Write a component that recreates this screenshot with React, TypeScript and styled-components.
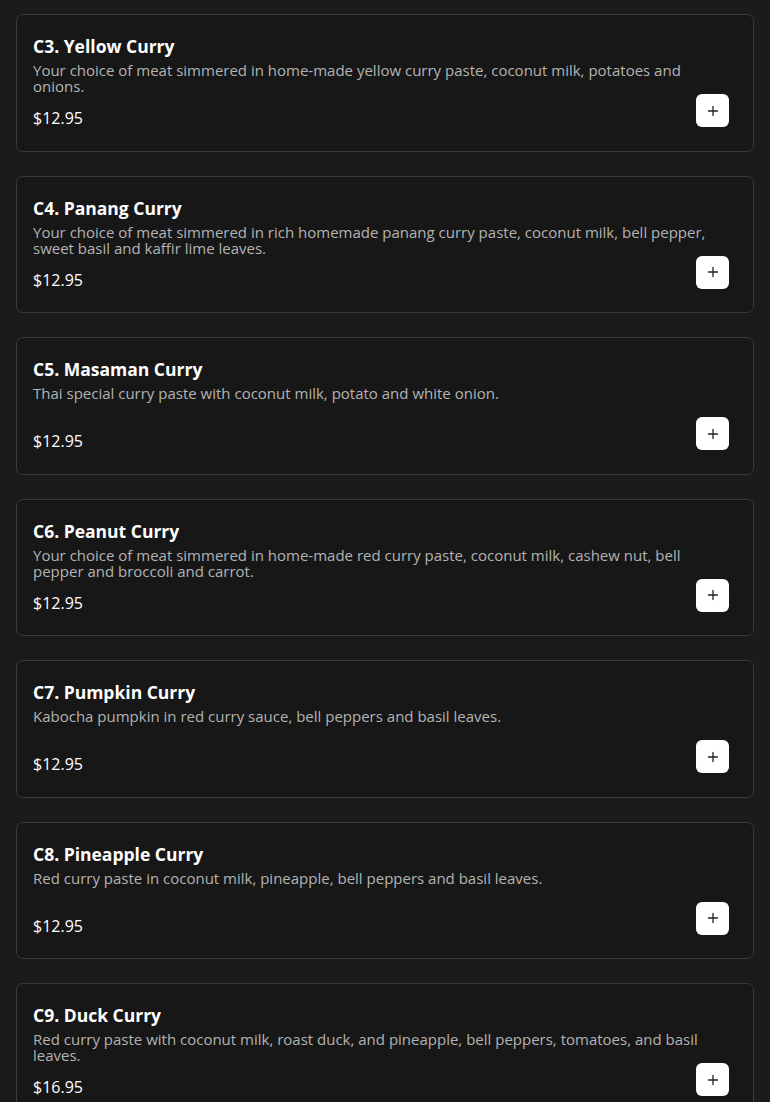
import React from "react";
import styled, { createGlobalStyle } from "styled-components";

const Global = createGlobalStyle`
  html, body { margin: 0; padding: 0; background: #1b1b1b; }
  body { font-family: "Open Sans", "Liberation Sans", sans-serif; color: #fff; }
  * { box-sizing: border-box; }
`;

const List = styled.div`
  display: flex;
  flex-direction: column;
  gap: 24px;
  padding: 14px 16px 24px 16px;
`;

const Card = styled.div`
  background: #171717;
  border: 1px solid #3a3a3a;
  border-radius: 7px;
  padding: 19px 24px 23.5px 16px;
  display: flex;
  flex-direction: column;
`;

const Title = styled.h3`
  margin: 0;
  font-size: 17.5px;
  line-height: 24px;
  font-weight: 700;
  color: #ffffff;
`;

const Desc = styled.p`
  margin: 4px 0 0 0;
  font-size: 15px;
  line-height: 16px;
  min-height: 32px;
  color: #b3b3b3;
  font-weight: 400;
`;

const Footer = styled.div`
  display: flex;
  align-items: flex-end;
  justify-content: space-between;
`;

const Price = styled.span`
  font-size: 16px;
  line-height: 18px;
  color: #ffffff;
`;

const AddButton = styled.button`
  width: 33px;
  height: 33px;
  border: none;
  border-radius: 6px;
  background: #ffffff;
  display: flex;
  align-items: center;
  justify-content: center;
  padding: 0;
  cursor: pointer;
`;

const PlusIcon = () => (
  <svg width="12" height="12" viewBox="0 0 12 12" fill="none">
    <path d="M6 1.5v9M1.5 6h9" stroke="#222" strokeWidth="1.3" strokeLinecap="round" />
  </svg>
);

const items = [
  {
    name: "C3. Yellow Curry",
    desc: "Your choice of meat simmered in home-made yellow curry paste, coconut milk, potatoes and onions.",
    price: "$12.95",
  },
  {
    name: "C4. Panang Curry",
    desc: "Your choice of meat simmered in rich homemade panang curry paste, coconut milk, bell pepper, sweet basil and kaffir lime leaves.",
    price: "$12.95",
  },
  {
    name: "C5. Masaman Curry",
    desc: "Thai special curry paste with coconut milk, potato and white onion.",
    price: "$12.95",
  },
  {
    name: "C6. Peanut Curry",
    desc: "Your choice of meat simmered in home-made red curry paste, coconut milk, cashew nut, bell pepper and broccoli and carrot.",
    price: "$12.95",
  },
  {
    name: "C7. Pumpkin Curry",
    desc: "Kabocha pumpkin in red curry sauce, bell peppers and basil leaves.",
    price: "$12.95",
  },
  {
    name: "C8. Pineapple Curry",
    desc: "Red curry paste in coconut milk, pineapple, bell peppers and basil leaves.",
    price: "$12.95",
  },
  {
    name: "C9. Duck Curry",
    desc: "Red curry paste with coconut milk, roast duck, and pineapple, bell peppers, tomatoes, and basil leaves.",
    price: "$16.95",
  },
];

export default function App() {
  return (
    <>
      <Global />
      <List>
        {items.map((it) => (
          <Card key={it.name}>
            <Title>{it.name}</Title>
            <Desc>{it.desc}</Desc>
            <Footer>
              <Price>{it.price}</Price>
              <AddButton aria-label="Add">
                <PlusIcon />
              </AddButton>
            </Footer>
          </Card>
        ))}
      </List>
    </>
  );
}
